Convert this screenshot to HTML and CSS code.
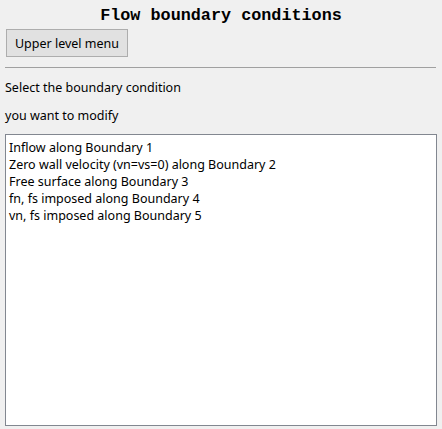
FILE: index.html
```html
<!DOCTYPE html>
<html lang="en">
<head>
    <meta charset="UTF-8">
    <title>Flow boundary conditions</title>
    <link rel="stylesheet" href="styles.css">
</head>
<body>
    <div class="panel">
        <h1 class="title">Flow boundary conditions</h1>
        <div class="toolbar">
            <button class="btn">Upper level menu</button>
        </div>
        <hr class="divider">
        <p class="prompt">Select the boundary condition</p>
        <p class="prompt">you want to modify</p>
        <ul class="listbox">
            <li>Inflow along Boundary 1</li>
            <li>Zero wall velocity (vn=vs=0) along Boundary 2</li>
            <li>Free surface along Boundary 3</li>
            <li>fn, fs imposed along Boundary 4</li>
            <li>vn, fs imposed along Boundary 5</li>
        </ul>
    </div>
</body>
</html>
```

FILE: styles.css
```css
html, body {
    margin: 0;
    background-color: #f0f0f0;
}
.panel {
    font-family: "Noto Sans", sans-serif;
    font-size: 12.5px;
    color: #000;
    padding: 0 5px;
}
.title {
    font-family: "Liberation Mono", monospace;
    font-size: 16.8px;
    font-weight: bold;
    text-align: center;
    margin: 0;
    padding-top: 6px;
    height: 23px;
    line-height: 20px;
}
.toolbar {
    padding-left: 1px;
    height: 28px;
}
.btn {
    font-family: inherit;
    font-size: 12.5px;
    width: 122px;
    height: 28px;
    background-color: #e1e1e1;
    border: 1px solid #adadad;
    border-radius: 0;
    color: #000;
    padding: 0;
    vertical-align: top;
}
.divider {
    border: none;
    border-top: 1px solid #a0a0a0;
    margin: 10px 0 0 0;
    width: 431px;
}
.prompt {
    margin: 12px 0 0 0;
    line-height: 16px;
}
.listbox {
    list-style: none;
    margin: 10px 0 0 0;
    width: 424px;
    height: 285px;
    padding: 4px 3px 1px;
    background-color: #fff;
    border: 1px solid #828790;
}
.listbox li {
    line-height: 17px;
}
```
